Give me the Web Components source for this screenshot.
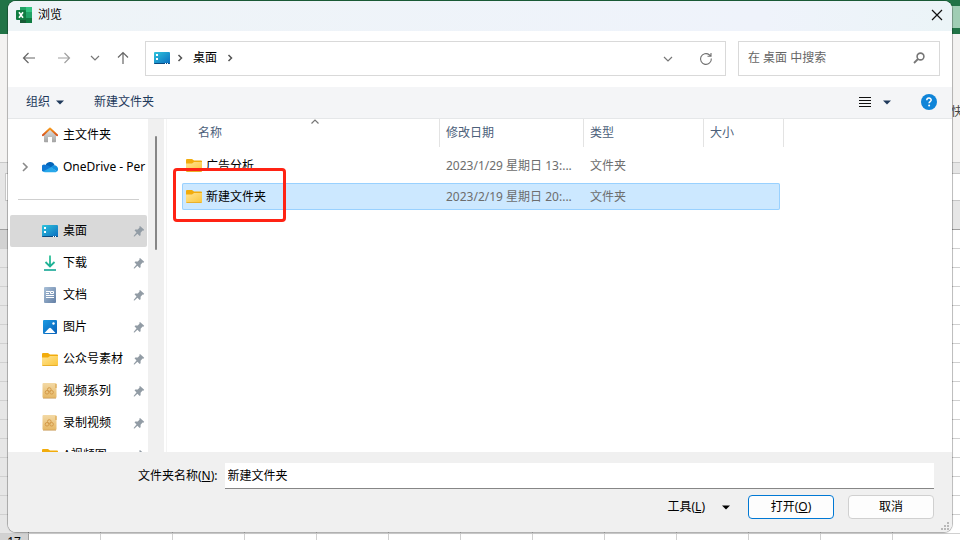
<!DOCTYPE html>
<html lang="zh-CN">
<head>
<meta charset="UTF-8">
<meta name="viewport" content="width=device-width, initial-scale=1.0">
<title>浏览</title>
<style>
    * { box-sizing: border-box; }
    body {
        margin: 0;
        height: 100vh;
        position: relative;
        overflow: hidden;
        font: 12px/16px "Noto Sans", "Noto Sans CJK SC", sans-serif;
        color: #000;
    }
    browse-dialog {
        position: absolute;
        inset: 1px 8px 8px;
    }
</style>
</head>
<body>
    <excel-sheet></excel-sheet>
    <browse-dialog>
        <title-bar slot="title">浏览</title-bar>
        <nav-bar slot="nav" place="桌面"></nav-bar>
        <tool-bar slot="tools"></tool-bar>
        <side-nav slot="side">
            <side-item icon="home">主文件夹</side-item>
            <side-item icon="cloud" expand>OneDrive - Per</side-item>
            <side-line></side-line>
            <side-item icon="desktop" pin active>桌面</side-item>
            <side-item icon="download" pin>下载</side-item>
            <side-item icon="doc" pin>文档</side-item>
            <side-item icon="picture" pin>图片</side-item>
            <side-item icon="folder" pin>公众号素材</side-item>
            <side-item icon="archive" pin>视频系列</side-item>
            <side-item icon="archive" pin>录制视频</side-item>
            <side-item icon="folder" pin>A视频图</side-item>
        </side-nav>
        <file-list slot="files"></file-list>
        <dialog-footer slot="footer" value="新建文件夹"></dialog-footer>
    </browse-dialog>

<script>
// shared reset for every shadow root
const base = `
    * { box-sizing: border-box; }
    button {
        display: flex;
        align-items: center;
        justify-content: center;
        margin: 0;
        padding: 0;
        border: 0;
        background: none;
        font: inherit;
        color: inherit;
    }
    input { font: inherit; color: inherit; border: 0; outline: 0; padding: 0; min-width: 0; background: none; }
    a { color: inherit; text-decoration: none; }
`;

class BaseElement extends HTMLElement {
    constructor() {
        super();
        this.attachShadow({ mode: 'open' });
    }
    connectedCallback() {
        const template = document.createElement('template');
        template.innerHTML = `<style>${base}${this.css()}</style>${this.html()}`;
        this.shadowRoot.replaceChildren(template.content.cloneNode(true));
    }
    css() { return ''; }
    html() { return '<slot></slot>'; }
}

// [width, height, markup]
const icons = {
    excel: [16, 16, `
        <path d="M4 0h12v16H4z" fill="#21a366"/>
        <path d="M4 0h6v5H4z" fill="#21a366"/><path d="M10 0h6v5h-6z" fill="#33c481"/>
        <path d="M4 5h6v6H4z" fill="#107c41"/><path d="M10 5h6v6h-6z" fill="#21a366"/>
        <path d="M4 11h12v5H4z" fill="#185c37"/><path d="M10 11h6v5h-6z" fill="#107c41"/>
        <rect y="3" width="10" height="10" rx="1" fill="#107c41"/>
        <path d="M3 5.2l4 5.6M7 5.2l-4 5.6" stroke="#fff" stroke-width="1.6"/>`],
    close: [12, 12, '<path d="M1 1l10 10M11 1L1 11" stroke="#111" stroke-width="1.2" fill="none"/>'],
    back: [14, 14, '<path d="M13 7H1.5M6.5 2l-5 5 5 5" stroke="#666" stroke-width="1.2" fill="none"/>'],
    forward: [14, 14, '<path d="M1 7h11.5M7.500 2l5 5-5 5" stroke="#a0a0a0" stroke-width="1.2" fill="none"/>'],
    up: [14, 14, '<path d="M7 13V1.500M2 6.500l5-5 5 5" stroke="#666" stroke-width="1.2" fill="none"/>'],
    down: [10, 8, '<path d="M1 2l4 4 4-4" stroke="#777" stroke-width="1.200" fill="none"/>'],
    right: [8, 8, '<path d="M2.500 1l3 3-3 3" stroke="#555" stroke-width="1.500" fill="none"/>'],
    expand: [8, 10, '<path d="M2 1l4 4-4 4" stroke="#8a8a8a" stroke-width="1.600" fill="none"/>'],
    sort: [8, 5, '<path d="M0.500 4.500L4 1l3.500 3.500" stroke="#777" stroke-width="1.200" fill="none"/>'],
    refresh: [14, 14, '<path d="M12.300 6.500A5.400 5.400 0 1 1 10.300 2.800L12 4M12 1v3.300H8.500" stroke="#707070" stroke-width="1.100" fill="none"/>'],
    search: [12, 12, '<circle cx="7.500" cy="4.500" r="3.400" fill="none" stroke="#777" stroke-width="1.600"/><path d="M5 7L1 11" stroke="#777" stroke-width="1.800"/>'],
    caret: [8, 5, '<path d="M0 0.500h8L4 4.500z" fill="currentColor"/>'],
    lines: [12, 12, '<path d="M0 1.500h12M0 4.500h12M0 7.500h12M0 10.500h12" stroke="#111"/>'],
    help: [16, 16, `
        <circle cx="8" cy="8" r="8" fill="#0f84d8"/>
        <path d="M5.800 6.300c0-3 4.400-2.800 4.400-.3 0 1.600-2.100 1.500-2.100 3.200" stroke="#fff" stroke-width="1.500" fill="none"/>
        <circle cx="8.100" cy="11.500" r="1" fill="#fff"/>`],
    desktop: [16, 12, `
        <defs><linearGradient id="g" x2="1" y2="1"><stop stop-color="#2fc4dc"/><stop offset="1" stop-color="#0b6cc0"/></linearGradient></defs>
        <rect width="16" height="12" rx="1" fill="url(#g)"/>
        <path d="M0 11h16v0a1 1 0 0 1-1 1H1a1 1 0 0 1-1-1z" fill="#0a4a80"/>
        <path d="M2 2h2v2H2zM2 6h2v2H2z" fill="#fff"/>
        <path d="M11 11h1v1h-1zM13 11h1v1h-1z" fill="#fff"/>`],
    home: [16, 16, `
        <defs><linearGradient id="g" y2="1" x2="0"><stop stop-color="#e4e4e4"/><stop offset="1" stop-color="#a2a2a2"/></linearGradient>
        <linearGradient id="r" y2="1" x2="0"><stop stop-color="#f79a1e"/><stop offset="1" stop-color="#d6501a"/></linearGradient></defs>
        <path d="M2 7l6-5.500L14 7v7.500a.8.8 0 0 1-.8.800H10V10H6v5.300H2.800a.8.8 0 0 1-.8-.8z" fill="url(#g)"/>
        <path d="M0.800 8.200L8 1.500l7.200 6.700" stroke="url(#r)" stroke-width="1.900" stroke-linecap="round" stroke-linejoin="round" fill="none"/>`],
    cloud: [16, 12, `
        <path d="M3.500 5A4.700 4.700 0 0 1 12.500 4L8 8z" fill="#0364b8"/>
        <path d="M1 10.500A3.500 3.500 0 0 1 4 4c2 0 3 1 6 3l-7 4z" fill="#0f78d4"/>
        <path d="M9 6.500c1-2 3.200-2.800 4.500-2 2.500 1 3.500 4 1.500 6z" fill="#1490df"/>
        <path d="M1 10.500L9.300 6l5.700 4.500c-.5.500-1 .7-2 .7H3.500c-1 0-2-.2-2.500-.7z" fill="#28a8ea"/>`],
    download: [14, 16, `
        <defs><linearGradient id="g" gradientUnits="userSpaceOnUse" x1="0" y1="0" x2="0" y2="16"><stop stop-color="#35c59a"/><stop offset="1" stop-color="#0ea593"/></linearGradient></defs>
        <path d="M7 0.500V11M2.500 7L7 11.500 11.500 7" stroke="url(#g)" stroke-width="1.800" fill="none"/><path d="M1 14.200h12v1.600H1z" fill="#12a594"/>`],
    doc: [12, 16, `
        <defs><linearGradient id="g" x2="1" y2="1"><stop stop-color="#a9c0d8"/><stop offset="1" stop-color="#637fa5"/></linearGradient></defs>
        <rect width="12" height="16" rx="1" fill="url(#g)"/>
        <path d="M2 4.500h4M2 6.500h3M2 8.500h8M2 10.500h8" stroke="#fff"/><path d="M6.500 4.500h3v2h-3z" fill="none" stroke="#fff"/>`],
    picture: [14, 14, `
        <defs><linearGradient id="g" x2="1" y2="1"><stop stop-color="#1d9be2"/><stop offset="1" stop-color="#0860b8"/></linearGradient></defs>
        <rect width="14" height="14" rx="1" fill="url(#g)"/>
        <path d="M1.500 13L6 8.200q1-1 2 0L12.500 13z" fill="#fff"/><circle cx="10.500" cy="3.500" r="1.200" fill="#fff"/>`],
    folder: [16, 13, `
        <defs><linearGradient id="g" x2="1" y2="1"><stop stop-color="#ffe393"/><stop offset="1" stop-color="#fbc638"/></linearGradient></defs>
        <path d="M0 1a1 1 0 0 1 1-1h5l2 1.500h7a1 1 0 0 1 1 1V6H0z" fill="#f2ac0c"/>
        <path d="M0 4.500h6l2-1.500h8v9a1 1 0 0 1-1 1H1a1 1 0 0 1-1-1z" fill="url(#g)"/>
        <path d="M0.500 12.500h15" stroke="#e9b02c"/>`],
    archive: [16, 16, `
        <defs><linearGradient id="g" y2="1" x2="0"><stop stop-color="#f3d9a5"/><stop offset="1" stop-color="#e5b765"/></linearGradient></defs>
        <rect width="14" height="15" x="0.500" rx="1" fill="url(#g)"/><path d="M1 15.200h13" stroke="#c99a58" stroke-width="0.800"/>
        <path d="M14 1v4" stroke="#d59b3c"/>
        <g fill="none" stroke="#d49a49"><circle cx="7.300" cy="6.500" r="1.800"/><circle cx="5" cy="9.300" r="1.800"/><circle cx="9.600" cy="9.300" r="1.800"/></g>`],
    pin: [12, 12, '<path d="M7 1l4.200 3.800-.8.900-.8-.1-2 2.200v2.400l-.9.800-2.300-2.200L1.500 11.500H.8v-.8L3.500 7.500 1.500 5.200l.8-.7 2.500.1 1.800-2L6.300 1.700z" fill="#929ca5"/>'],
    grip: [8, 8, '<path d="M6 0h2v2H6zM3 3h2v2H3zM6 3h2v2H6zM0 6h2v2H0zM3 6h2v2H3zM6 6h2v2H6z" fill="#b8b8b8"/>']
};

class UiIcon extends BaseElement {
    css() {
        return `
            :host { display: inline-flex; flex: none; }
            svg { display: block; }
        `;
    }
    html() {
        const [w, h, body] = icons[this.getAttribute('name')];
        return `<svg width="${w}" height="${h}" viewBox="0 0 ${w} ${h}" aria-hidden="true">${body}</svg>`;
    }
}

// workbook behind the dialog
class ExcelSheet extends BaseElement {
    css() {
        return `
            :host { display: flex; flex-direction: column; height: 100%; overflow: hidden; background: #fff; }
            .top { flex: none; height: 34px; background: #217346; display: flex; justify-content: flex-end; padding: 6px 0; }
            .top span { width: 14px; background: #a0cdb4; }
            .ribbon {
                flex: none; height: 129px; background: #f3f2f1; border-bottom: 1px solid #c8c8c8;
                display: flex; justify-content: flex-end; align-items: flex-end; padding-bottom: 42px; color: #444;
            }
            .ribbon span { width: 9px; white-space: nowrap; overflow: hidden; }
            .formula { flex: none; height: 38px; padding: 10px 0 0 5px; background: #e6e6e6; display: flex; }
            .formula span { flex: 1; background: #fff; border: 1px solid #c6c6c6; border-right: 0; }
            .heads { flex: none; height: 29px; background: #e6e6e6; border-bottom: 1px solid #9f9f9f; }
            .row { flex: none; display: flex; height: 19px; }
            .row b, .row span { flex: none; border: solid #d0d0d0; border-width: 0 1px 1px 0; }
            .row b { width: 29px; background: #e6e6e6; text-align: center; font-weight: 400; color: #222; border-right-color: #9f9f9f; }
            .row span { width: 72px; }
            .row:nth-of-type(5) b, .row:last-child b { background: #d2d2d2; color: #000; }
        `;
    }
    html() {
        let rows = '';
        for (let i = 1; i <= 17; i++) {
            rows += `<div class="row"><b>${i}</b>${'<span></span>'.repeat(13)}</div>`;
        }
        return `
            <div class="top"><span></span></div>
            <div class="ribbon"><span>快</span></div>
            <div class="formula"><span></span></div>
            <div class="heads"></div>
            ${rows}
        `;
    }
}

class BrowseDialog extends BaseElement {
    css() {
        return `
            :host {
                display: flex; flex-direction: column; overflow: hidden;
                border-radius: 8px; background: #fff;
                box-shadow: 0 0 0 1px #00000038, 0 1px 2px #00000026;
            }
            .body { flex: 1; min-height: 0; display: flex; }
        `;
    }
    html() {
        return `
            <slot name="title"></slot>
            <slot name="nav"></slot>
            <slot name="tools"></slot>
            <div class="body"><slot name="side"></slot><slot name="files"></slot></div>
            <slot name="footer"></slot>
        `;
    }
}

class TitleBar extends BaseElement {
    css() {
        return `
            :host {
                display: flex; align-items: center; gap: 6px; flex: none; height: 30px; padding: 0 0 2px 8px;
                background: linear-gradient(90deg, #eef4f7, #eff3fb 80%, #ebf4f7);
            }
            button { margin-left: auto; width: 30px; height: 28px; }
        `;
    }
    html() {
        return `<ui-icon name="excel"></ui-icon><slot></slot><button aria-label="关闭"><ui-icon name="close"></ui-icon></button>`;
    }
}

class NavBar extends BaseElement {
    css() {
        return `
            :host { display: flex; align-items: center; flex: none; height: 56px; padding: 0 12px 2px 3px; }
            button { height: 33px; }
            .wide { width: 35px; }
            .mid { width: 28px; }
            .address, .search { display: flex; align-items: center; height: 35px; border: 1px solid #d9d9d9; }
            .address { flex: 1; margin: 0 12px 0 8px; padding-left: 8px; }
            .address .sep { width: 20px; }
            .address a { padding: 0 3px; }
            .tail { display: flex; margin-left: auto; padding-top: 2px; }
            .tail button { width: 38px; height: 31px; }
            .search { width: 202px; padding-left: 9px; }
            .search input { flex: 1; color: #666; }
            .search input::placeholder { color: #666; opacity: 1; }
            .search button { width: 40px; }
        `;
    }
    html() {
        const place = this.getAttribute('place');
        return `
            <button class="wide" aria-label="后退"><ui-icon name="back"></ui-icon></button>
            <button class="wide" aria-label="前进"><ui-icon name="forward"></ui-icon></button>
            <button class="mid" aria-label="最近的位置"><ui-icon name="down"></ui-icon></button>
            <button class="mid" aria-label="向上"><ui-icon name="up"></ui-icon></button>
            <div class="address">
                <ui-icon name="desktop"></ui-icon>
                <button class="sep" aria-label="展开"><ui-icon name="right"></ui-icon></button>
                <a href="#">${place}</a>
                <button class="sep" aria-label="展开"><ui-icon name="right"></ui-icon></button>
                <div class="tail">
                    <button aria-label="以前的位置"><ui-icon name="down"></ui-icon></button>
                    <button aria-label="刷新"><ui-icon name="refresh"></ui-icon></button>
                </div>
            </div>
            <div class="search">
                <input type="text" aria-label="搜索" placeholder="在 ${place} 中搜索">
                <button aria-label="搜索"><ui-icon name="search"></ui-icon></button>
            </div>
        `;
    }
}

class ToolBar extends BaseElement {
    css() {
        return `
            :host {
                display: flex; align-items: center; flex: none; height: 32px; padding: 0 15px 1px 18px;
                background: #f4f5f7; border-bottom: 1px solid #e5e7e9; color: #1e395b;
            }
            button { gap: 6px; }
            .new { margin-left: 30px; }
            .view { margin-left: auto; gap: 12px; }
            .help { margin-left: 30px; }
        `;
    }
    html() {
        return `
            <button>组织<ui-icon name="caret"></ui-icon></button>
            <button class="new">新建文件夹</button>
            <button class="view" aria-label="更改视图"><ui-icon name="lines"></ui-icon><ui-icon name="caret"></ui-icon></button>
            <button class="help" aria-label="帮助"><ui-icon name="help"></ui-icon></button>
        `;
    }
}

class SideNav extends BaseElement {
    css() {
        return `
            :host { display: flex; flex: none; width: 156px; overflow: hidden; }
            nav { flex: 1; min-width: 0; padding: 0 1px 0 2px; overflow: hidden; }
            .track { flex: none; width: 16px; background: #f0f0f0; padding: 17px 7px; }
            .thumb { width: 2px; height: 114px; border-radius: 1px; background: #868686; }
        `;
    }
    html() {
        return `<nav><slot></slot></nav><div class="track"><div class="thumb"></div></div>`;
    }
}

class SideItem extends BaseElement {
    css() {
        return `
            :host { display: block; }
            :host([active]) { background: #d9d9d9; border-radius: 2px; }
            a { display: flex; align-items: center; height: 32px; white-space: nowrap; }
            .arrow { flex: none; width: 32px; padding-left: 11px; display: flex; }
            .icon { flex: none; width: 16px; margin-right: 5px; display: flex; justify-content: center; }
            .text { flex: 1; min-width: 0; overflow: hidden; }
            .pin { margin-right: 2px; }
        `;
    }
    html() {
        return `
            <a href="#">
                <span class="arrow">${this.hasAttribute('expand') ? '<ui-icon name="expand"></ui-icon>' : ''}</span>
                <span class="icon"><ui-icon name="${this.getAttribute('icon')}"></ui-icon></span>
                <span class="text"><slot></slot></span>
                ${this.hasAttribute('pin') ? '<ui-icon class="pin" name="pin"></ui-icon>' : ''}
            </a>
        `;
    }
}

class SideLine extends BaseElement {
    css() {
        return `
            :host { display: flex; align-items: center; height: 32px; padding: 0 8px; }
            hr { flex: 1; margin: 0; border: 0; border-top: 1px solid #cfcfcf; }
        `;
    }
    html() { return '<hr>'; }
}

const files = [
    { name: '广告分析', date: '2023/1/29 星期日 13:...', type: '文件夹' },
    { name: '新建文件夹', date: '2023/2/19 星期日 20:...', type: '文件夹', selected: true }
];

class FileList extends BaseElement {
    css() {
        return `
            :host { display: block; flex: 1; min-width: 0; margin-left: 2px; border-left: 1px solid #f4f4f4; padding-left: 15px; }
            table { display: block; width: 602px; max-width: 100%; }
            thead { display: block; }
            tbody { display: grid; gap: 4px; padding: 5px 4px 0 0; }
            tr { display: grid; grid-template-columns: 258px 144px 120px 1fr; position: relative; }
            th {
                height: 28px; padding: 6px; border-right: 1px solid #e3e3e3;
                font-weight: 400; text-align: left; color: #4c607a; position: relative;
            }
            th:first-child { padding-left: 16px; }
            th ui-icon { position: absolute; top: 0; left: 50%; }
            td { padding: 6px 6px 5px; height: 27px; color: #6d6d6d; white-space: nowrap; overflow: hidden; }
            td:first-child { display: flex; align-items: center; gap: 4px; padding: 0 4px; color: #000; }
            .selected { background: #cce8ff; box-shadow: inset 0 0 0 1px #99d1ff; border-radius: 2px; }
            .selected td:first-child { overflow: visible; }
            .mark {
                position: absolute; left: -9px; top: -15px; width: 113px; height: 54px;
                border: 3px solid #ff2314; border-radius: 4px;
            }
        `;
    }
    html() {
        const rows = files.map(f => `
            <tr class="${f.selected ? 'selected' : ''}">
                <td><ui-icon name="folder"></ui-icon>${f.name}${f.selected ? '<span class="mark"></span>' : ''}</td>
                <td>${f.date}</td>
                <td>${f.type}</td>
                <td></td>
            </tr>
        `).join('');
        return `
            <table>
                <thead>
                    <tr><th>名称<ui-icon name="sort"></ui-icon></th><th>修改日期</th><th>类型</th><th>大小</th></tr>
                </thead>
                <tbody>${rows}</tbody>
            </table>
        `;
    }
}

class DialogFooter extends BaseElement {
    css() {
        return `
            :host {
                display: flex; flex-direction: column; gap: 6px; flex: none; position: relative;
                padding: 11px 18px 13px 130px; background: #f0f0f0;
            }
            .field { display: flex; align-items: center; gap: 7px; }
            .field input { flex: 1; height: 26px; padding: 0 3px 2px; background: #fff; border-bottom: 1px solid #868686; }
            .actions { display: flex; justify-content: flex-end; gap: 14px; }
            .actions button { height: 24px; }
            .tools { gap: 17px; padding-right: 4px; }
            .btn { width: 86px; border: 1px solid #d0d0d0; border-radius: 4px; background: #fdfdfd; }
            .primary { border-color: #0078d4; }
            .grip { position: absolute; right: 3px; bottom: 2px; }
        `;
    }
    html() {
        return `
            <div class="field">
                <label for="name">文件夹名称(<u>N</u>):</label>
                <input id="name" type="text" value="${this.getAttribute('value')}">
            </div>
            <div class="actions">
                <button class="tools"><span>工具(<u>L</u>)</span><ui-icon name="caret"></ui-icon></button>
                <button class="btn primary"><span>打开(<u>O</u>)</span></button>
                <button class="btn">取消</button>
            </div>
            <ui-icon class="grip" name="grip"></ui-icon>
        `;
    }
}

customElements.define('ui-icon', UiIcon)
customElements.define('excel-sheet', ExcelSheet)
customElements.define('browse-dialog', BrowseDialog)
customElements.define('title-bar', TitleBar)
customElements.define('nav-bar', NavBar)
customElements.define('tool-bar', ToolBar)
customElements.define('side-nav', SideNav)
customElements.define('side-item', SideItem)
customElements.define('side-line', SideLine)
customElements.define('file-list', FileList)
customElements.define('dialog-footer', DialogFooter)
</script>
</body>
</html>
